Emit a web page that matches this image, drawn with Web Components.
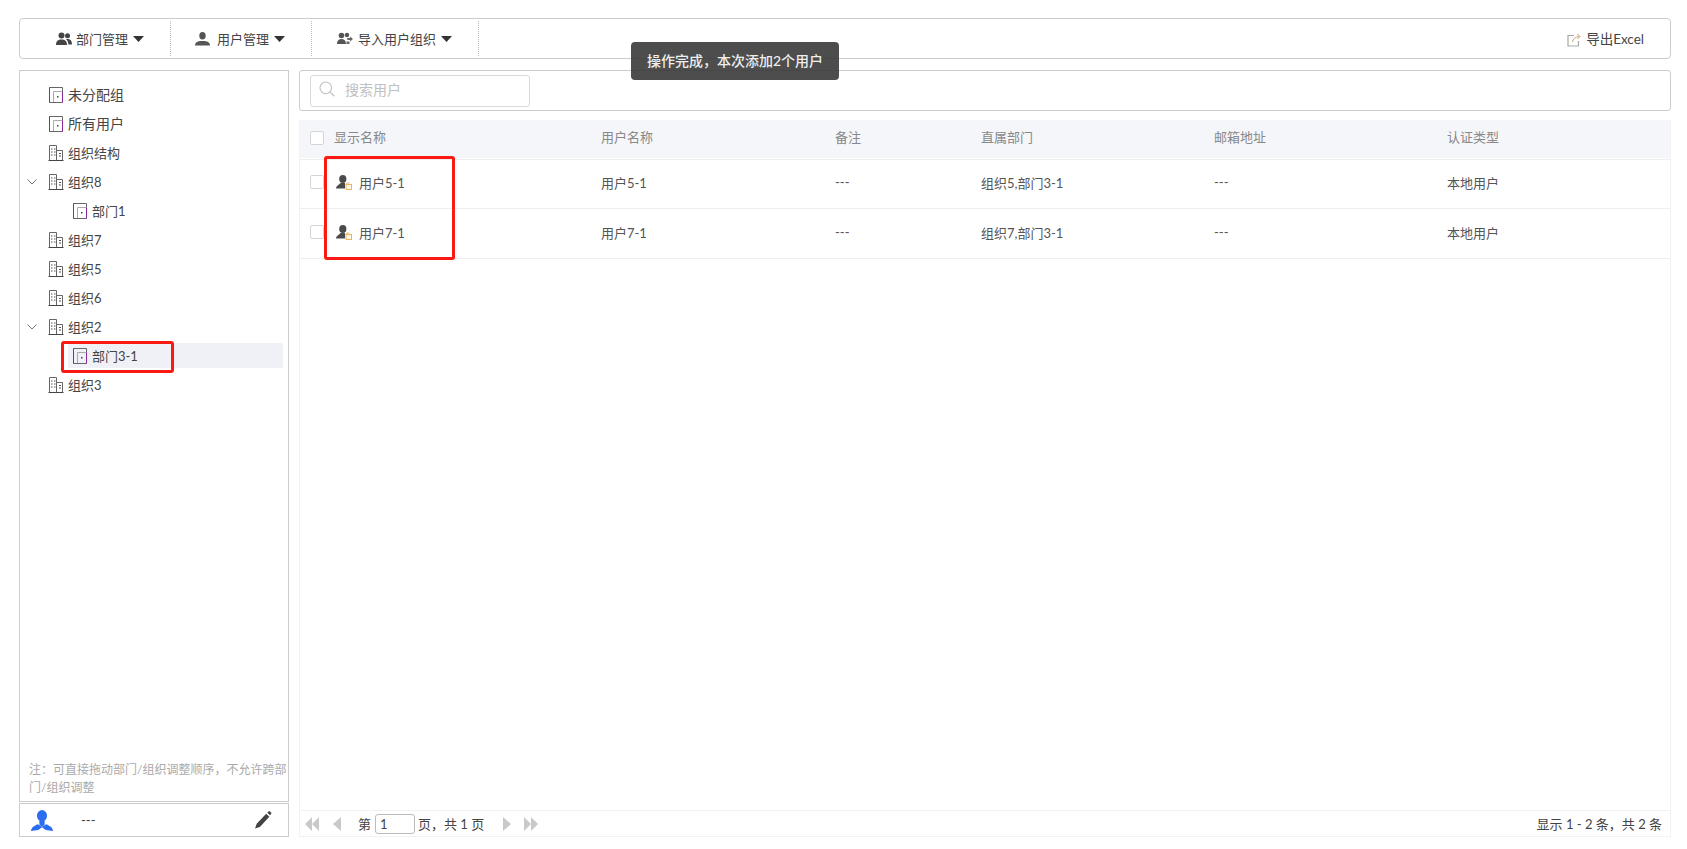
<!DOCTYPE html>
<html lang="zh"><head><meta charset="utf-8"><title>用户管理</title>
<style>
html,body{margin:0;padding:0;background:#fff;height:100%;overflow:hidden}
body{font:13px "Noto Sans CJK SC","Noto Sans",sans-serif;color:#555}
</style></head><body>
<app-shell></app-shell>
<script>
const F='"Lato","Noto Sans CJK SC",sans-serif';
const ICONS={
 users:'<svg width="16" height="14" viewBox="0 0 16 14"><circle cx="5.5" cy="3.6" r="3" fill="#444"/><path d="M0 13c0-4 2-5.5 5.5-5.5S11 9 11 13z" fill="#444"/><circle cx="11.5" cy="3.8" r="2.5" fill="#444"/><path d="M10 7.2c3.5-.6 6 1 6 5.3h-3.6c0-2.4-.8-4-2.4-5.3z" fill="#444"/></svg>',
 user:'<svg width="15" height="14" viewBox="0 0 15 14"><ellipse cx="7.5" cy="3.8" rx="3.2" ry="3.8" fill="#555"/><path d="M0 13.5c0-3 2.500-4 5-4.500h5c2.500.5 5 1.500 5 4.500z" fill="#555"/></svg>',
 imp:'<svg width="16" height="13" viewBox="0 0 16 13"><circle cx="4.5" cy="3.5" r="2.8" fill="#555"/><path d="M0 12c0-3.500 1.800-5 4.500-5S9 8.500 9 12z" fill="#555"/><circle cx="10" cy="3" r="2.200" fill="#555"/><path d="M10 6h3V4.500l3 2.500-3 2.500V8h-2.500zM9.500 9.500h3V12h-3z" fill="#666"/></svg>',
 caret:'<svg width="11" height="6" viewBox="0 0 11 6"><path d="M0 0h11L5.500 6z" fill="#333"/></svg>',
 export:'<svg width="14" height="14" viewBox="0 0 14 14" fill="none"><path d="M7 2.500H1V13h10.500V8" stroke="#a9a9a9" stroke-width="1.200"/><path d="M5.500 9C6 6 8 4 12 3.500M10 1l3 2.500L10.500 6" stroke="#c9a56c"/></svg>',
 door:'<svg width="16" height="16" viewBox="0 0 16 16" fill="none"><path d="M1.500 15.500V.5h13v15z" stroke="#666"/><path d="M1.500.5v15M14.500 4v11.500" stroke="#8a2a9a"/><path d="M5.500 15V4.500h9" stroke="#aaa"/><rect x="9" y="9" width="1.500" height="1.500" fill="#444"/></svg>',
 org:'<svg width="16" height="16" viewBox="0 0 16 16" fill="none"><path d="M1.500 15.500V.5h7v15M8.500 5.500h6v10" stroke="#666"/><path d="M.5 15.500h15" stroke="#444"/><path d="M3 4h1.500M6 4h1.500M3 7h1.500M6 7h1.500M3 10h1.500M6 10h1.500M11 8.500h2M11 11h2" stroke="#555" stroke-width="1.200"/></svg>',
 chev:'<svg width="10" height="6" viewBox="0 0 10 6" fill="none"><path d="M.5.500 5 5 9.500.5" stroke="#777"/></svg>',
 search:'<svg width="16" height="16" viewBox="0 0 16 16" fill="none"><circle cx="6.800" cy="6.800" r="5.800" stroke="#c4c4c4" stroke-width="1.200"/><path d="M11 11l4.300 4.300" stroke="#c4c4c4" stroke-width="1.300"/></svg>',
 local:'<svg width="16" height="15" viewBox="0 0 16 15"><ellipse cx="6.800" cy="4" rx="3.600" ry="4" fill="#4a4a4a"/><path d="M0 13.500c0-2.500 3-3.500 4.500-5.500h4.500v5.500z" fill="#4a4a4a"/><rect x="10" y="9.500" width="5.500" height="5" fill="#fff7e6" stroke="#eab560"/><path d="M10 9.500l1-1.500h2.500" stroke="#eab560" fill="none"/></svg>',
 blue:'<svg width="22" height="21" viewBox="0 0 21 20"><ellipse cx="10.500" cy="5.500" rx="4.800" ry="5.500" fill="#2b6cf0"/><path d="M0 20c.2-3.500 3-5 6.500-6.500l4 2.500 4-2.500c3.500 1.500 6.300 3 6.500 6.500l-7-1-3.500-2.500L7 19z" fill="#2b6cf0"/><path d="M8 10h5v4l-2.500 2L8 14z" fill="#2b6cf0"/></svg>',
 pencil:'<svg width="18" height="18" viewBox="0 0 16 17"><path d="M11 2.500l3 3L5 15l-4.500 1.500L2 12z" fill="#444"/><path d="M12 1.500 13.200.4a1 1 0 0 1 1.400 0l1 1.100a1 1 0 0 1 0 1.400l-1 1.100z" fill="#444"/></svg>',
 first:'<svg width="14" height="14" viewBox="0 0 14 14"><path d="M7 0v14L0 7zM14 0v14L7 7z" fill="#c9c9c9"/></svg>',
 prev:'<svg width="8" height="14" viewBox="0 0 8 14"><path d="M8 0v14L0 7z" fill="#c9c9c9"/></svg>',
 next:'<svg width="8" height="14" viewBox="0 0 8 14"><path d="M0 0v14l8-7z" fill="#c9c9c9"/></svg>',
 last:'<svg width="14" height="14" viewBox="0 0 14 14"><path d="M0 0v14l7-7zM7 0v14l7-7z" fill="#c9c9c9"/></svg>'
};
function def(name,css,html,init){
 customElements.define(name,class extends HTMLElement{
  connectedCallback(){
   if(this.shadowRoot)return;
   const r=this.attachShadow({mode:'open'});
   r.innerHTML='<style>'+css+'</style>'+(typeof html==='function'?html(this):html);
   if(init)init(r,this);
  }
 });
}
def('app-shell',`:host{display:flex;flex-direction:column;box-sizing:border-box;width:1687px;height:849px;padding:18px 16px 12px 19px;position:relative;font-family:${F}}
.main{display:flex;gap:10px;flex:1;min-height:0;margin-top:11px}`,
`<tool-bar></tool-bar><div class="main"><dept-panel></dept-panel><user-panel></user-panel></div><toast-msg>操作完成，本次添加2个用户</toast-msg>`);

def('tool-bar',`:host{display:flex;height:41px;box-sizing:border-box;border:1px solid #ccc;border-radius:4px;align-items:center}
.r{margin-left:auto;margin-right:26px;display:flex;align-items:center;gap:5px;font-size:13.5px;color:#444;line-height:16px}
.r svg{margin-top:2px}`,
`<tb-item icon="users" w="151" pl="36" gap="4">部门管理</tb-item><tb-item icon="user" w="141" pl="24" gap="7">用户管理</tb-item><tb-item icon="imp" w="167" pl="25">导入用户组织</tb-item><div class="r">${ICONS.export}<span>导出Excel</span></div>`);
def('tb-item',`:host{display:flex;align-items:center;box-sizing:border-box;height:35px;border-right:1px dotted #bbb;font-size:13px;color:#444}
.t{margin:0 5px 0 var(--g,5px)}svg{display:block}`,
h=>`${ICONS[h.getAttribute('icon')]}<span class="t" style="--g:${h.getAttribute('gap')||5}px"><slot></slot></span>${ICONS.caret}`,
(r,h)=>{h.style.width=h.getAttribute('w')+'px';h.style.paddingLeft=h.getAttribute('pl')+'px';});

def('dept-panel',`:host{display:flex;flex-direction:column;width:270px;flex:none}
.tree{flex:1;border:1px solid #ccc;box-sizing:border-box;padding:9px 0 0 0;display:flex;flex-direction:column;min-height:0;position:relative}
.note{margin-top:auto;padding:0 0 4px 9px;font-size:12px;line-height:18px;color:#aaa}
.foot{height:34px;box-sizing:border-box;border:1px solid #ccc;margin-top:1px;display:flex;align-items:center;padding:0 16px 0 11px;color:#444;font-size:13px}
.foot .d{margin-left:28px}.foot svg:last-child{margin-left:auto}`,
`<div class="tree">
<tree-row icon="door" label="未分配组" big></tree-row>
<tree-row icon="door" label="所有用户" big></tree-row>
<tree-row icon="org" label="组织结构"></tree-row>
<tree-row icon="org" label="组织8" open></tree-row>
<tree-row icon="door" label="部门1" child></tree-row>
<tree-row icon="org" label="组织7"></tree-row>
<tree-row icon="org" label="组织5"></tree-row>
<tree-row icon="org" label="组织6"></tree-row>
<tree-row icon="org" label="组织2" open></tree-row>
<tree-row icon="door" label="部门3-1" child selected></tree-row>
<tree-row icon="org" label="组织3"></tree-row>
<div class="note">注：可直接拖动部门/组织调整顺序，不允许跨部门/组织调整</div>
<red-mark style="left:41px;top:270px;width:113px;height:32px"></red-mark>
</div>
<div class="foot">${ICONS.blue}<span class="d">---</span>${ICONS.pencil}</div>`);
def('tree-row',`:host{display:flex;align-items:center;height:29px;flex:none;box-sizing:border-box;position:relative;font-size:13px;color:#444}
:host([big]){font-size:14px}
:host([big]) span{margin-top:-2px}
.c{width:28px;flex:none;display:flex;justify-content:flex-start;padding-left:7px;box-sizing:border-box}
.c svg{display:block}
.b{display:flex;align-items:center;height:25px;gap:4px;flex:1;margin-right:5px;border-radius:2px}
:host([child]) .b{margin-left:24px}
:host([selected]) .b{background:#f0f1f7;margin-left:20px;padding-left:4px}
svg{flex:none}`,
h=>`<div class="c">${h.hasAttribute('open')?ICONS.chev:''}</div><div class="b">${ICONS[h.getAttribute('icon')]}<span>${h.getAttribute('label')}</span></div>`);
def('red-mark',`:host{position:absolute;box-sizing:border-box;border:3px solid #fb1a12;border-radius:3px;pointer-events:none}`,'');

def('user-panel',`:host{display:flex;flex-direction:column;flex:1;min-width:0;position:relative}
.s{height:41px;box-sizing:border-box;border:1px solid #ccc;border-radius:3px;display:flex;align-items:center;padding-left:10px;flex:none}
.i{width:220px;height:32px;box-sizing:border-box;border:1px solid #d9d9e0;border-radius:3px;display:flex;align-items:center;padding:0 0 3px 8px;gap:10px;color:#c0c0c0;font-size:14px}
.t{flex:1;margin-top:9px;border-right:1px solid #f2f2f2;border-bottom:1px solid #f2f2f2;border-left:1px solid #f2f2f2;display:flex;flex-direction:column;min-height:0}
.sp{flex:1}`,
`<div class="s"><div class="i">${ICONS.search}<span>搜索用户</span></div></div>
<div class="t">
<table-row head a="显示名称" b="用户名称" c="备注" d="直属部门" e="邮箱地址" f="认证类型"></table-row>
<table-row a="用户5-1" b="用户5-1" c="---" d="组织5,部门3-1" e="---" f="本地用户"></table-row>
<table-row a="用户7-1" b="用户7-1" c="---" d="组织7,部门3-1" e="---" f="本地用户"></table-row>
<div class="sp"></div>
<pager-bar></pager-bar>
</div>
<red-mark style="left:25px;top:86px;width:131px;height:104px"></red-mark>`);
def('table-row',`:host{display:grid;grid-template-columns:301px 234px 146px 233px 233px 1fr;align-items:center;height:50px;box-sizing:border-box;border-bottom:1px solid #eee;color:#555;font-size:13px;flex:none;padding-bottom:3px}
:host([head]){height:39px;background:#f5f6fa;border-bottom:1px solid #fff;color:#888;box-shadow:0 1px 0 #eee;padding-bottom:5px}
.a{display:flex;align-items:center;padding-left:10px}
.cb{width:14px;height:14px;box-sizing:border-box;border:1px solid #d4d4da;border-radius:2px;background:#fff;margin-right:10px;flex:none}
:host([head]) .cb{margin-top:3px}
.ic{margin-right:7px;margin-left:2px;display:flex}`,
h=>{const g=k=>h.getAttribute(k),head=h.hasAttribute('head');
 return `<div class="a"><span class="cb"></span>${head?'':`<span class="ic">${ICONS.local}</span>`}<span>${g('a')}</span></div><span>${g('b')}</span><span>${g('c')}</span><span>${g('d')}</span><span>${g('e')}</span><span>${g('f')}</span>`});
def('pager-bar',`:host{display:flex;align-items:center;height:26px;box-sizing:border-box;border-top:1px solid #f2f2f2;padding:0 8px 0 5px;font-size:13px;color:#444;flex:none}
svg{flex:none;display:block}
.in{width:40px;height:20px;box-sizing:border-box;border:1px solid #bbb;border-radius:3px;padding-left:4px;margin:0 3px 0 4px;line-height:18px}
.l{margin-left:auto}`,
`${ICONS.first}<span style="width:14px"></span>${ICONS.prev}<span style="width:17px"></span><span>第</span><span class="in">1</span><span>页，共 1 页</span><span style="width:19px"></span>${ICONS.next}<span style="width:13px"></span>${ICONS.last}<span class="l">显示 1 - 2 条，共 2 条</span>`);
def('toast-msg',`:host{position:absolute;left:631px;top:42px;width:208px;height:38px;box-sizing:border-box;background:rgba(51,51,51,.87);border-radius:4px;color:#eee;font-size:14px;font-weight:500;display:flex;align-items:center;justify-content:center;padding-bottom:2px}`,'<slot></slot>');
</script>
</body></html>
